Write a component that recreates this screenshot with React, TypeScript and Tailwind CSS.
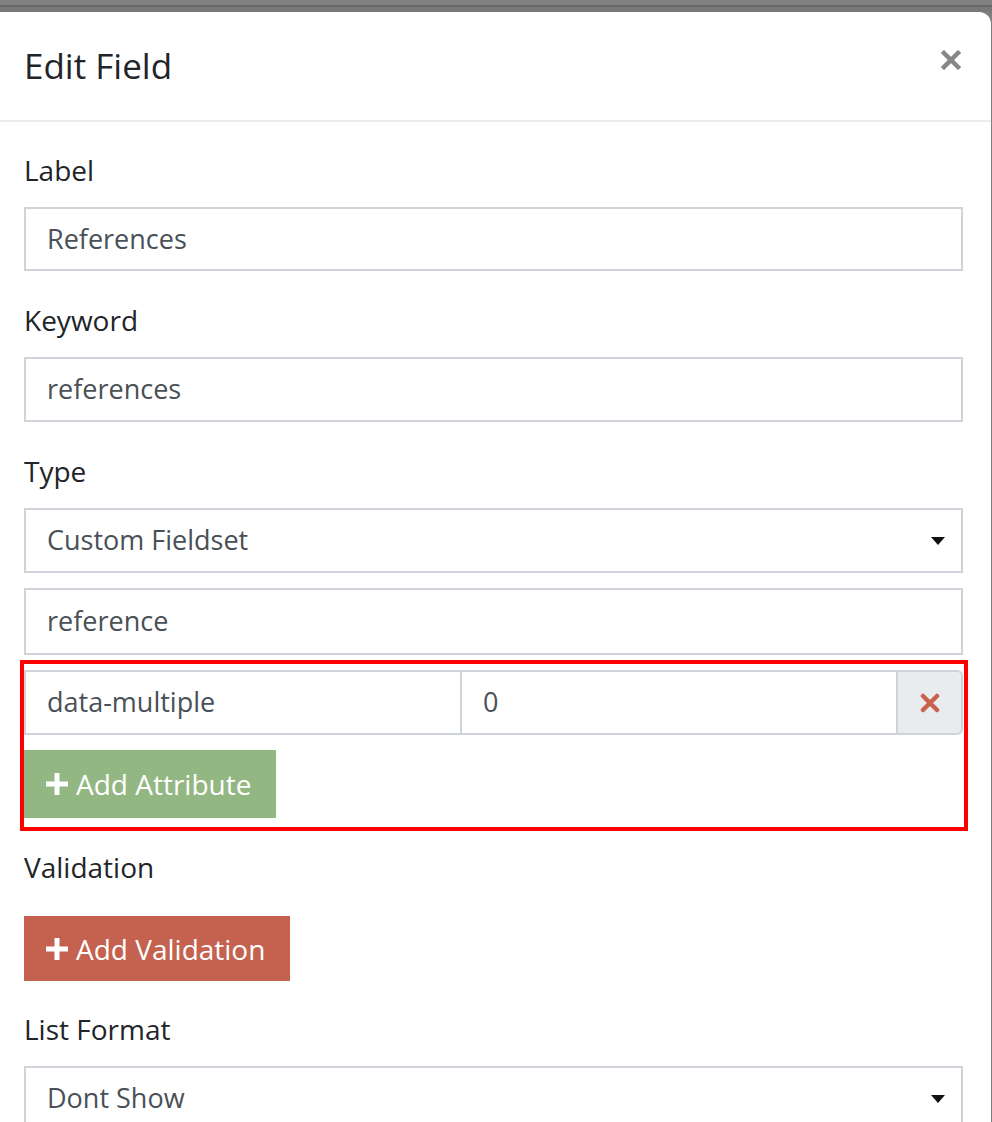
import React from 'react';

const font = { fontFamily: '"Open Sans", "Liberation Sans", sans-serif' };

const Caret = () => (
    <svg width="14" height="8" viewBox="0 0 14 8" className="shrink-0">
        <path d="M0 0 L14 0 L7 8 Z" fill="#111" />
    </svg>
);

const Plus = () => (
    <svg width="22" height="22" viewBox="0 0 22 22" className="shrink-0">
        <path d="M8.5 0h5v8.5H22v5h-8.5V22h-5v-8.5H0v-5h8.5z" fill="#fff" />
    </svg>
);

const FieldLabel = ({ children, className = 'mb-[16px]' }: { children: React.ReactNode; className?: string }) => (
    <div className={`h-[42px] leading-[42px] text-[28px] text-[#212529] ${className}`}>{children}</div>
);

const TextInput = ({ value, className = '' }: { value: string; className?: string }) => (
    <div className={`h-[64px] border-2 border-[#ced4da] bg-white flex items-center px-[21px] text-[27px] text-[#495057] ${className}`}>
        {value}
    </div>
);

const SelectInput = ({ value }: { value: string }) => (
    <div className="h-[65px] border-2 border-[#ced4da] bg-white flex items-center justify-between pl-[21px] pr-[16px] text-[27px] text-[#495057]">
        <span>{value}</span>
        <Caret />
    </div>
);

export default function App() {
    return (
        <div className="min-h-screen bg-[#7f7f7f] overflow-hidden" style={font}>
            <div className="h-[5px] bg-[#808080]" />
            <div className="h-[2px] bg-[#676767]" />
            <div className="h-[5px] bg-[#787878]" />
            <div className="bg-white rounded-tr-[12px] mr-[1px]">
                {/* header */}
                <div className="h-[110px] border-b-2 border-[#e9ecef] flex items-center justify-between pl-[24px] pr-[30px]">
                    <h5 className="text-[35px] leading-[44px] text-[#212529]">Edit Field</h5>
                    <svg width="20" height="20" viewBox="0 0 20 20" className="mt-[-12px]">
                        <path d="M3 3 L17 17 M17 3 L3 17" stroke="#878787" strokeWidth="4.5" strokeLinecap="square" />
                    </svg>
                </div>

                {/* body */}
                <div className="pl-[24px] pr-[28px] pt-[27px] pb-[40px]">
                    <FieldLabel>Label</FieldLabel>
                    <TextInput value="References" className="mb-[28px]" />

                    <FieldLabel>Keyword</FieldLabel>
                    <TextInput value="references" className="mb-[28px] h-[65px]" />

                    <FieldLabel>Type</FieldLabel>
                    <SelectInput value="Custom Fieldset" />
                    <TextInput value="reference" className="mt-[15px] h-[67px]" />

                    {/* highlighted attribute block */}
                    <div className="relative pt-[15px] pb-[13px] mb-[15px]">
                        <div className="absolute left-[-4px] right-[-5px] top-[5px] bottom-0 border-4 border-[#ff0000] pointer-events-none" />
                        <div className="flex h-[65px]">
                            <div className="flex-1 border-2 border-[#ced4da] flex items-center px-[21px] text-[27px] text-[#495057]">data-multiple</div>
                            <div className="flex-1 border-2 border-l-0 border-[#ced4da] flex items-center px-[21px] text-[27px] text-[#495057]">0</div>
                            <div className="w-[65px] border-2 border-l-0 border-[#ced4da] bg-[#e9ecef] rounded-r-[6px] flex items-center justify-center">
                                <svg width="20" height="20" viewBox="0 0 20 20">
                                    <path d="M3 3 L17 17 M17 3 L3 17" stroke="#c9614e" strokeWidth="4.5" strokeLinecap="round" />
                                </svg>
                            </div>
                        </div>
                        <button className="mt-[15px] h-[68px] w-[252px] bg-[#93b783] text-white text-[28px] flex items-center pl-[22px] gap-[8px]">
                            <Plus />
                            <span>Add Attribute</span>
                        </button>
                    </div>

                    <FieldLabel className="mb-[28px]">Validation</FieldLabel>
                    <button className="h-[65px] w-[266px] bg-[#c4624f] text-white text-[28px] flex items-center pl-[22px] gap-[8px] mb-[27px]">
                        <Plus />
                        <span>Add Validation</span>
                    </button>

                    <FieldLabel>List Format</FieldLabel>
                    <SelectInput value="Dont Show" />
                </div>
            </div>
        </div>
    );
}
